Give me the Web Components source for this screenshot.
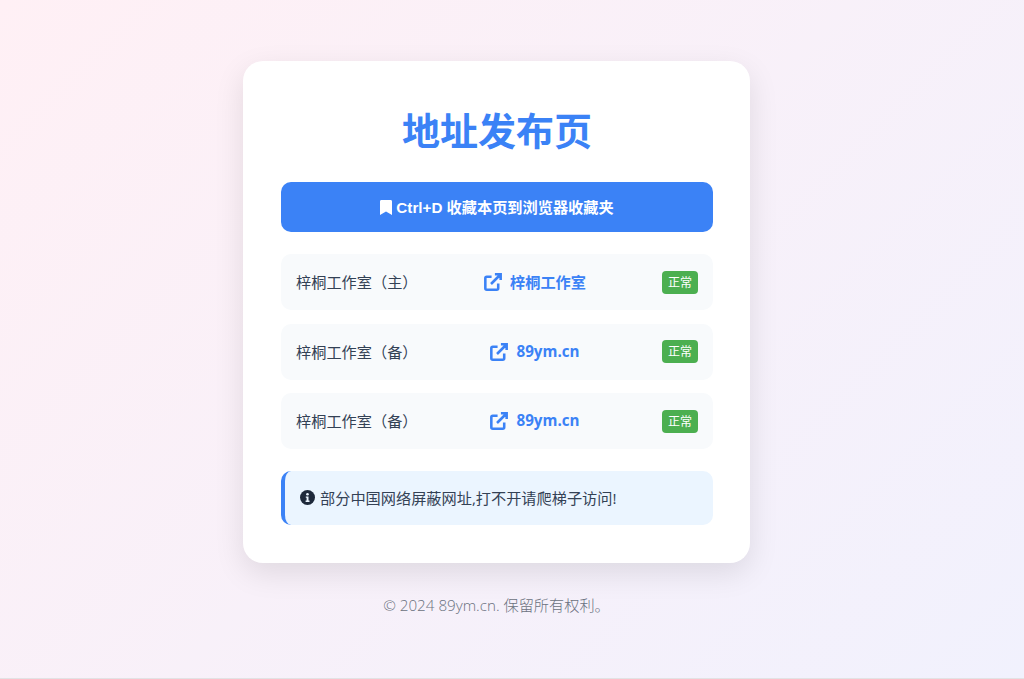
<!DOCTYPE html>
<html lang="zh">
<head>
<meta charset="utf-8">
<title>地址发布页</title>
<style>
  html, body { margin: 0; height: 100%; }
  body {
    height: 679px;
    box-sizing: border-box;
    border-bottom: 1px solid #e2e2e4;
    overflow: hidden;
    background: linear-gradient(135deg, #fff0f5 0%, #f1f1fd 100%);
    font-family: "Open Sans", "Noto Sans CJK SC", sans-serif;
    display: flex;
    flex-direction: column;
    align-items: center;
    padding: 61px 31px 0 0;
  }
</style>
</head>
<body>
<release-card>
  <span slot="title">地址发布页</span>
  <bookmark-banner>Ctrl+D 收藏本页到浏览器收藏夹</bookmark-banner>
  <link-row label="梓桐工作室（主）" site="梓桐工作室"></link-row>
  <link-row label="梓桐工作室（备）" site="89ym.cn"></link-row>
  <link-row label="梓桐工作室（备）" site="89ym.cn"></link-row>
  <notice-box>部分中国网络屏蔽网址,打不开请爬梯子访问!</notice-box>
</release-card>
<page-footer>© 2024 89ym.cn. 保留所有权利。</page-footer>

<script>
class ReleaseCard extends HTMLElement {
  constructor () {
    super()
    this.shadow = this.attachShadow({ mode: 'open' })
  }

  connectedCallback () {
    this.shadow.innerHTML = /* html */`
      <style>
        :host {
          display: block;
          box-sizing: border-box;
          width: 507px;
          height: 502px;
          padding: 38px 37px 38px 38px;
          background: #fff;
          border-radius: 20px;
          box-shadow: 0 10px 30px rgba(0, 0, 0, 0.1);
        }
        h1 {
          margin: 0 0 24px;
          height: 59px;
          line-height: 60px;
          text-align: center;
          font-size: 38px;
          font-weight: 700;
          color: #3b82f6;
          font-family: "Noto Sans CJK SC", sans-serif;
        }
        .list {
          display: flex;
          flex-direction: column;
        }
      </style>
      <h1><slot name="title"></slot></h1>
      <div class="list"><slot></slot></div>
    `
  }
}

class BookmarkBanner extends HTMLElement {
  constructor () {
    super()
    this.shadow = this.attachShadow({ mode: 'open' })
  }

  connectedCallback () {
    this.shadow.innerHTML = /* html */`
      <style>
        :host {
          display: flex;
          align-items: center;
          justify-content: center;
          gap: 4px;
          height: 50px;
          margin-bottom: 22px;
          background: #3b82f6;
          border-radius: 10px;
          color: #fff;
          font: 700 15.2px "Liberation Sans", "Noto Sans CJK SC", sans-serif;
        }
        span { padding-bottom: 2px; }
        svg { width: 12px; height: 15px; fill: #fff; }
      </style>
      <svg viewBox="0 0 12 15"><path d="M0 1.4C0 .6.6 0 1.4 0h9.2c.8 0 1.4.6 1.4 1.4V15L6 11.4 0 15z"/></svg>
      <span><slot></slot></span>
    `
  }
}

class LinkRow extends HTMLElement {
  constructor () {
    super()
    this.shadow = this.attachShadow({ mode: 'open' })
  }

  connectedCallback () {
    this.shadow.innerHTML = /* html */`
      <style>
        :host {
          display: flex;
          justify-content: space-between;
          align-items: center;
          box-sizing: border-box;
          height: 56px;
          margin-bottom: 13.6px;
          padding: 0 15px;
          background: #f8fafc;
          border-radius: 10px;
          font-family: "Open Sans", "Noto Sans CJK SC", sans-serif;
        }
        .label {
          width: 112px;
          min-width: 0;
          white-space: nowrap;
          padding-bottom: 2px;
          font-size: 15.2px;
          color: #334155;
        }
        .site {
          display: flex;
          align-items: center;
          gap: 8px;
          font-size: 15.2px;
          font-weight: 700;
          color: #3b82f6;
        }
        .site span { padding-bottom: 2px; }
        svg { width: 18px; height: 18px; fill: none; stroke: #3b82f6; stroke-width: 2.7; }
        .status {
          width: 36px;
          height: 23px;
          line-height: 23px;
          text-align: center;
          background: #4caf50;
          border-radius: 4px;
          color: #fff;
          font-size: 12px;
        }
      </style>
      <span class="label">${this.getAttribute('label')}</span>
      <div class="site">
        <svg viewBox="0 0 19 19"><path d="M8 4H3a1.6 1.6 0 0 0-1.6 1.600V16a1.600 1.600 0 0 0 1.600 1.600h10.400A1.600 1.600 0 0 0 15 16v-5M11.500 1.400h6.100v6.100M17.400 1.600 7.400 11.600"/></svg>
        <span>${this.getAttribute('site')}</span>
      </div>
      <span class="status">正常</span>
    `
  }
}

class NoticeBox extends HTMLElement {
  constructor () {
    super()
    this.shadow = this.attachShadow({ mode: 'open' })
  }

  connectedCallback () {
    this.shadow.innerHTML = /* html */`
      <style>
        :host {
          display: flex;
          align-items: center;
          gap: 5px;
          box-sizing: border-box;
          height: 54px;
          margin-top: 8.2px;
          padding: 0 15px;
          background: #ebf5ff;
          border-left: 4px solid #3b82f6;
          border-radius: 10px;
          color: #334155;
          font-size: 15.2px;
          font-family: "Open Sans", "Noto Sans CJK SC", sans-serif;
        }
        span { padding-bottom: 2px; }
        svg { width: 15px; height: 15px; flex: none; }
      </style>
      <svg viewBox="0 0 15 15">
        <circle cx="7.5" cy="7.5" r="7.5" fill="#1e293b"/>
        <circle cx="7.500" cy="4.200" r="1.300" fill="#ebf5ff"/>
        <path d="M5.800 6.400h2.700v4.200h1v1.300H5.600v-1.300h1V7.700h-.8z" fill="#ebf5ff"/>
      </svg>
      <span><slot></slot></span>
    `
  }
}

class PageFooter extends HTMLElement {
  constructor () {
    super()
    this.shadow = this.attachShadow({ mode: 'open' })
  }

  connectedCallback () {
    this.shadow.innerHTML = /* html */`
      <style>
        :host {
          display: block;
          margin-top: 31px;
          line-height: 22px;
          text-align: center;
          color: #6b7280;
          font-size: 15.2px;
          font-weight: 300;
          font-family: "Open Sans", "Noto Sans CJK SC", sans-serif;
        }
      </style>
      <slot></slot>
    `
  }
}

customElements.define('release-card', ReleaseCard)
customElements.define('bookmark-banner', BookmarkBanner)
customElements.define('link-row', LinkRow)
customElements.define('notice-box', NoticeBox)
customElements.define('page-footer', PageFooter)
</script>
</body>
</html>
